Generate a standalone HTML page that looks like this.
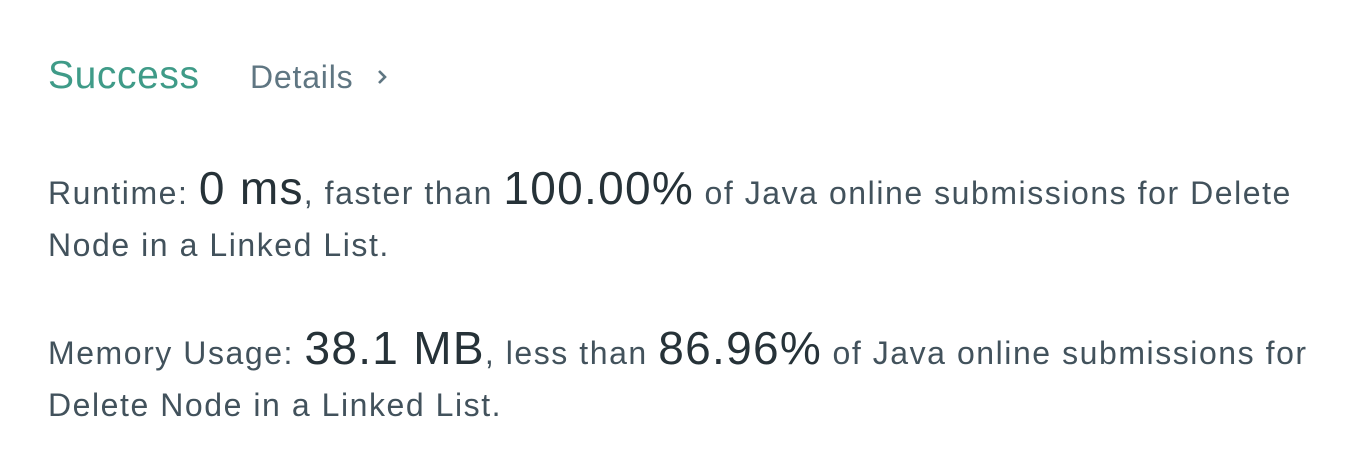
<!DOCTYPE html>
<html><head><style>
html,body{margin:0;padding:0;background:#fff;width:1368px;height:460px;overflow:hidden}
body{font-family:"Liberation Sans",sans-serif;}
.hdr{position:absolute;left:48px;top:54px;white-space:nowrap}
.s{color:#3f9b88;font-size:39px;letter-spacing:0.6px;font-weight:500}
.d{color:#5f7682;font-size:32px;letter-spacing:0.8px;position:absolute;left:202px;top:5px}
.ch{position:absolute;left:326px;top:12px}
.p{position:absolute;left:48px;font-size:32px;letter-spacing:1.55px;line-height:52px;color:#42525c;white-space:nowrap;}
.b{font-size:46px;color:#263238;letter-spacing:1.3px}
</style></head><body>
<div class="hdr"><span class="s">Success</span><span class="d">Details</span><span class="ch"><svg width="16" height="20" viewBox="0 0 16 20"><path d="M5 5 L11 11 L5 17" stroke="#5f7682" stroke-width="2.6" fill="none"/></svg></span></div>
<div class="p" style="top:162px">Runtime: <span class="b">0 ms</span>, faster than <span class="b">100.00%</span> of Java online submissions for Delete<br>Node in a Linked List.</div>
<div class="p" style="top:322px">Memory Usage: <span class="b">38.1 MB</span>, less than <span class="b">86.96%</span> of Java online submissions for<br>Delete Node in a Linked List.</div>
</body></html>
